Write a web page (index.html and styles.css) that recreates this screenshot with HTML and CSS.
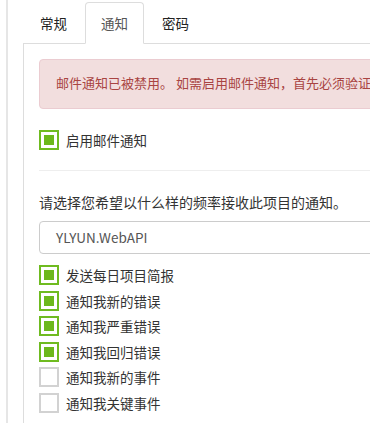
FILE: index.html
```html
<!DOCTYPE html>
<html lang="zh-CN">
<head>
<meta charset="utf-8">
<title>通知</title>
<link rel="stylesheet" href="styles.css">
</head>
<body>
<div class="page">
  <div class="frame">
    <ul class="tabs">
      <li class="tab">常规</li>
      <li class="tab active">通知</li>
      <li class="tab">密码</li>
    </ul>
    <div class="panel">
      <div class="alert">邮件通知已被禁用。 如需启用邮件通知，首先必须验证您的电子邮件地址。</div>
      <label class="check-row first">
        <span class="box checked"></span>
        <span class="label">启用邮件通知</span>
      </label>
      <hr class="rule">
      <p class="desc">请选择您希望以什么样的频率接收此项目的通知。</p>
      <div class="select">YLYUN.WebAPI</div>
      <div class="list">
        <label class="check-row"><span class="box checked"></span><span class="label">发送每日项目简报</span></label>
        <label class="check-row"><span class="box checked"></span><span class="label">通知我新的错误</span></label>
        <label class="check-row"><span class="box checked"></span><span class="label">通知我严重错误</span></label>
        <label class="check-row"><span class="box checked"></span><span class="label">通知我回归错误</span></label>
        <label class="check-row"><span class="box"></span><span class="label">通知我新的事件</span></label>
        <label class="check-row"><span class="box"></span><span class="label">通知我关键事件</span></label>
      </div>
    </div>
  </div>
</div>
</body>
</html>
```
FILE: styles.css
```css
html, body {
  margin: 0;
  padding: 0;
  overflow: hidden;
  background: #fff;
}
body {
  font-family: "Noto Sans CJK SC", "Noto Sans", sans-serif;
  font-size: 13.5px;
  color: #333;
}
.page {
  padding-left: 6px;
  height: 423px;
}
.frame {
  border-left: 2px solid #e6e6e6;
  padding-left: 15px;
  width: 700px;
  height: 423px;
}
.tabs {
  list-style: none;
  margin: 0;
  padding: 2px 0 0 1px;
  display: flex;
  border-bottom: 1px solid #ddd;
}
.tab {
  padding: 10px 15px;
  line-height: 20px;
  border: 1px solid transparent;
  border-radius: 4px 4px 0 0;
  margin-right: 2px;
  margin-bottom: -1px;
  color: #222;
}
.tab.active {
  border-color: #ddd;
  border-bottom-color: #fff;
  background: #fff;
  color: #555;
}
.panel {
  border-left: 1px solid #ddd;
  padding: 15px 15px 0 15px;
  height: 400px;
}
.alert {
  background: #f2dede;
  border: 1px solid #ebccd1;
  border-radius: 4px;
  color: #a94442;
  font-size: 13px;
  padding: 14px 16px 16px 16px;
  line-height: 18px;
  white-space: nowrap;
  margin-bottom: 20px;
}
.check-row {
  display: flex;
  align-items: center;
  gap: 7px;
  height: 20px;
  margin-bottom: 5.6px;
}
.check-row.first {
  height: 22px;
  margin-bottom: 0;
}
.box {
  box-sizing: border-box;
  width: 20px;
  height: 20px;
  border: 2px solid #d2d2d2;
  background: #fff;
  display: flex;
  align-items: center;
  justify-content: center;
  flex: none;
}
.box.checked {
  border-color: #6fbb20;
}
.box.checked::after {
  content: "";
  width: 10px;
  height: 10px;
  background: #6cb81b;
}
.label {
  line-height: 20px;
}
.rule {
  border: 0;
  border-top: 1px solid #eee;
  margin: 19px 0 0 0;
}
.desc {
  margin: 21px 0 0 0;
  line-height: 20px;
  font-size: 14px;
}
.select {
  margin-top: 9px;
  box-sizing: border-box;
  height: 33px;
  border: 1px solid #ccc;
  border-radius: 4px;
  padding: 0 16px;
  line-height: 31px;
  color: #555;
}
.list {
  margin-top: 11px;
}
```
